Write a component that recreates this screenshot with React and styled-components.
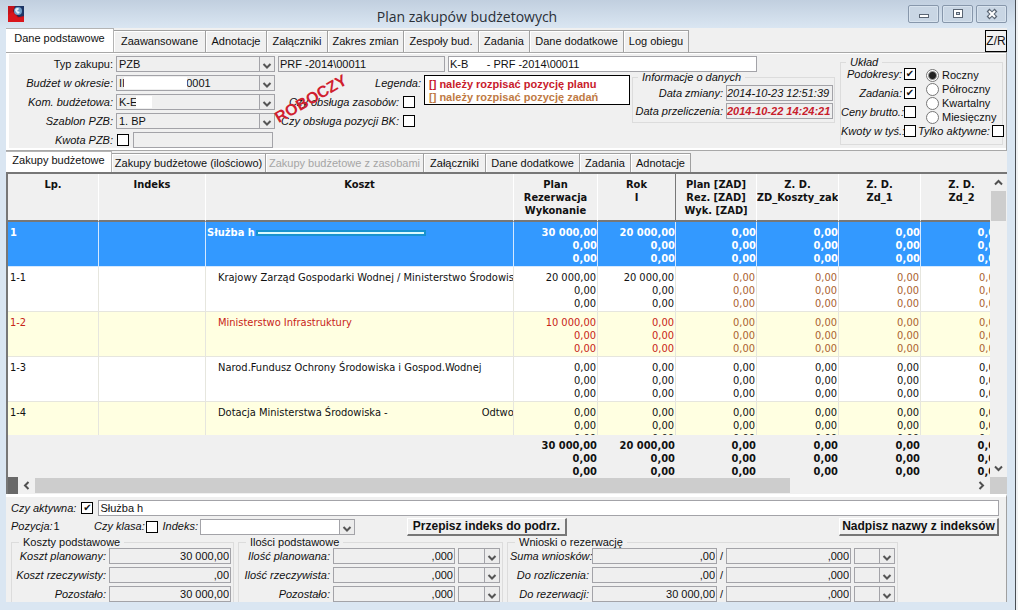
import React from 'react';
import styled, { createGlobalStyle, css } from 'styled-components';

const GlobalStyle = createGlobalStyle`
  * {
    box-sizing: border-box;
  }
  body {
    margin: 0;
    background: #f0f2f4;
    font-family: "Liberation Sans", Arial, sans-serif;
    font-size: 11px;
    line-height: 13px;
    color: #111;
  }
  input, select, button {
    font: inherit;
    color: inherit;
    margin: 0;
    border-radius: 0;
  }
`;

const Window = styled.div`
  display: flex;
  flex-direction: column;
  height: 100vh;
  margin-right: 2px;
  padding: 0 7px 8px 6px;
  border-right: 1px solid #4a4f55;
  background: linear-gradient(#c1cfdf, #dae6f2 28px);
`;

const TitleBar = styled.header`
  display: flex;
  align-items: center;
  height: 28px;
  flex: none;
  padding-left: 2px;

  & h1 {
    flex: 1;
    margin: 0;
    padding: 4px 0 0 2px;
    font: 14px "Open Sans", "Noto Sans", sans-serif;
    text-align: center;
    color: #2b3038;
  }
`;

const WindowButtons = styled.div`
  display: flex;
  gap: 3px;
  padding-right: 1px;
`;

const WindowButton = styled.button`
  display: flex;
  align-items: center;
  justify-content: center;
  width: 31px;
  height: 18px;
  padding: 0;
  border: 1px solid #8797ab;
  border-radius: 2px;
  background: #c9d6e4;
  box-shadow: inset 0 0 0 1px #d8e3ee;
`;

const Client = styled.main`
  display: flex;
  flex-direction: column;
  flex: 1;
  min-height: 0;
  margin-right: 1px;
  overflow: hidden;
  background: #f0f0f0;
`;

const Tabs = styled.nav`
  display: flex;
  align-items: flex-end;
  flex: none;
  height: ${p => (p.$small ? 21 : 24)}px;
`;

const Tab = styled.button`
  height: ${p => (p.$small ? 19 : 22)}px;
  min-width: ${p => p.$width}px;
  padding: 0;
  border: 1px solid #a0a0a0;
  border-left: 0;
  border-bottom: 0;
  background: #f0f0f0;
  box-shadow: inset 1px 1px 0 #fff;
  white-space: nowrap;

  &:disabled {
    color: #a5a5a5;
  }
  ${p => p.$active && css`
    height: 100%;
    padding-bottom: 4px;
    border-color: #b4b4b4;
    background: #fff;
  `}
`;

const CornerButton = styled.button`
  width: 22px;
  height: 22px;
  margin-left: auto;
  padding: 0;
  border: 1px solid #000;
  background: #f0f0f0;
  font-size: 12px;
`;

const TopPanel = styled.section`
  display: flex;
  justify-content: space-between;
  flex: none;
  height: 99px;
  padding: 3px 3px 0 0;
  border: 1px solid #a8a8a8;
  border-width: 1px 1px 1px 0;
  box-shadow: inset 3px 1px 0 #fff, inset 0 -2px 0 #fff;
`;

const Stack = styled.div`
  display: flex;
  flex-direction: column;
  gap: ${p => p.$gap || 0}px;
`;

const Line = styled.div`
  display: flex;
  align-items: center;
  height: ${p => p.$height || 16}px;
  gap: ${p => p.$gap || 0}px;
`;

const Columned = styled.div`
  display: flex;
  align-items: flex-start;
  gap: ${p => p.$gap || 0}px;
`;

const Label = styled.label`
  width: ${p => (p.$width ? `${p.$width}px` : 'auto')};
  flex: none;
  text-align: right;
  font-style: ${p => (p.$plain ? 'normal' : 'italic')};
  white-space: nowrap;
`;

const Field = styled.input`
  width: ${p => (p.$width ? `${p.$width}px` : 'auto')};
  flex: ${p => (p.$width ? 'none' : 1)};
  min-width: 0;
  height: 16px;
  padding: 0 1px;
  border: 1px solid #a3a3a8;
  background: ${p => (p.$white ? '#fff' : '#efefef')};
  text-align: ${p => (p.$number ? 'right' : 'left')};
  outline: 0;
  ${p => p.$date && css`
    padding: 0;
    font-style: italic;
  `}
  ${p => p.$alert && css`
    font-weight: bold;
    color: #c8202c;
  `}
`;

const Check = styled.input.attrs({ type: 'checkbox' })`
  appearance: none;
  position: relative;
  flex: none;
  width: 12px;
  height: 12px;
  border: 1px solid #000;
  background: #fff;

  &:checked::after {
    content: "✔";
    position: absolute;
    inset: 0;
    font: 10px/10px "DejaVu Sans", sans-serif;
    text-align: center;
  }
`;

const Radio = styled.input.attrs({ type: 'radio' })`
  appearance: none;
  flex: none;
  width: 13px;
  height: 13px;
  border: 1px solid #777;
  border-radius: 50%;
  background: #fff;

  &:checked {
    background: radial-gradient(circle, #222 0 3px, #fff 5px);
  }
`;

const ComboBox = styled.div`
  position: relative;
  flex: none;
  width: ${p => p.$width}px;
  height: 16px;

  & select {
    appearance: none;
    width: 100%;
    height: 16px;
    padding: 0 2px;
    border: 1px solid #a3a3a8;
    background: ${p => (p.$white ? '#fff' : '#efefef')};
    outline: 0;
  }
  & svg {
    position: absolute;
    top: 0;
    right: 0;
    pointer-events: none;
  }
`;

const Blank = styled.span`
  position: absolute;
  left: ${p => p.$left}px;
  top: 2px;
  width: ${p => p.$width}px;
  height: 12px;
  background: #fff;
`;

const Middle = styled.div`
  position: relative;
  display: flex;
  width: 357px;
`;

const Checks = styled.div`
  display: flex;
  flex-direction: column;
  gap: 3px;
  width: 149px;
`;

const Stamp = styled.strong`
  position: absolute;
  left: -4px;
  top: 16px;
  font-size: 16px;
  line-height: 16px;
  color: #d0202e;
  transform: rotate(-30deg);
  pointer-events: none;
`;

const Legend = styled.div`
  width: 206px;
  height: 30px;
  padding: 2px 4px;
  border: 1px solid #000;
  background: #fff;
  font-weight: bold;
`;

const LegendLine = styled.div`
  color: ${p => p.$color};
`;

const Group = styled.fieldset`
  min-width: 0;
  margin: 0;
  padding: ${p => p.$padding || '0 2px'};
  border: 1px solid #dcdcdc;

  & legend {
    margin-left: 5px;
    padding: 0 4px;
    height: 12px;
    line-height: 12px;
    font-style: ${p => (p.$italic ? 'italic' : 'normal')};
  }
`;

const InfoGroup = styled(Group)`
  margin-top: -4px;
`;

const LayoutGroup = styled(Group)`
  align-self: flex-start;
  width: 163px;
`;

const GridFrame = styled.section`
  display: flex;
  flex-direction: column;
  flex: 1;
  min-height: 0;
  border-top: 2px solid #777;
  border-left: 2px solid #777;
  font-family: "DejaVu Sans Condensed", "DejaVu Sans", sans-serif;
`;

const GridArea = styled.div`
  display: flex;
  flex: 1;
  min-height: 0;
`;

const GridColumn = styled.div`
  display: flex;
  flex-direction: column;
  flex: 1;
  min-width: 0;
  overflow: hidden;
`;

const GridBody = styled.div`
  flex: 1;
  min-height: 0;
  overflow: hidden;
`;

const GridTotals = styled.div`
  flex: none;
  height: 42px;
  overflow: hidden;
`;

const Table = styled.table`
  width: 995px;
  table-layout: fixed;
  border-collapse: separate;
  border-spacing: 0;
`;

const HeadCell = styled.th`
  height: 48px;
  padding: 4px 0 0;
  border-right: 1px solid ${p => (p.$split ? '#777' : '#fff')};
  border-bottom: 2px solid #777;
  vertical-align: top;
  font-weight: bold;
  white-space: pre;
  overflow: hidden;

  & span {
    display: flex;
    justify-content: center;
  }
`;

const Row = styled.tr`
  background: ${p => p.$background};
  color: ${p => p.$color || '#111'};
  font-weight: ${p => (p.$bold ? 'bold' : 'normal')};
  --line: ${p => (p.$bold ? '#d5e9ff' : '#e6e6de')};
`;

const Cell = styled.td`
  height: 45px;
  padding: 4px ${p => (p.$number && !p.$tight ? 1 : 0)}px 0 ${p => p.$indent || 2}px;
  border-right: 1px solid var(--line);
  border-bottom: 1px solid var(--line);
  vertical-align: top;
  text-align: ${p => (p.$number ? 'right' : 'left')};
  color: ${p => p.$color || 'inherit'};
  white-space: pre;
  overflow: hidden;
`;

const TotalCell = styled.td`
  padding: 4px 1px 0 0;
  text-align: right;
  font-weight: bold;
  white-space: pre;
  overflow: hidden;
`;

const MoreText = styled.span`
  margin-left: 94px;
`;

const Redacted = styled.span`
  display: inline-block;
  width: 170px;
  height: 6px;
  margin-left: 1px;
  border: 2px solid #1793cf;
  background: #d9fbff;
`;

const VerticalBar = styled.div`
  display: flex;
  flex-direction: column;
  flex: none;
  width: 17px;
`;

const VerticalThumb = styled.div`
  height: 30px;
  width: 15px;
  margin: 0 0 auto 1px;
  background: #cdcdcd;
`;

const HorizontalBar = styled.div`
  display: flex;
  align-items: stretch;
  flex: none;
  height: 17px;
`;

const BarEnd = styled.span`
  width: ${p => p.$width}px;
  flex: none;
  background: ${p => p.$color};
`;

const HorizontalThumb = styled.div`
  flex: 0 1 755px;
  margin: 1px auto 1px 0;
  background: #cdcdcd;
`;

const ArrowButton = styled.button`
  display: flex;
  align-items: center;
  justify-content: center;
  flex: none;
  width: 17px;
  height: 17px;
  padding: 0;
  border: 0;
  background: #f0f0f0;
`;

const BottomPanel = styled.section`
  flex: none;
  height: 108px;
  overflow: hidden;
  padding: 2px 7px 0 5px;
  border-top: 3px solid #fff;
  border-right: 1px solid #a0a0a0;
`;

const NameLine = styled(Line)`
  height: 18px;
  gap: 5px;
`;

const BottomLine = styled(Line)`
  height: 19px;
`;

const Position = styled.span`
  width: 81px;

  & i {
    margin-right: 1px;
  }
`;

const PushButton = styled.button`
  height: 18px;
  min-width: 160px;
  margin-left: ${p => (p.$end ? 'auto' : '50px')};
  padding: 0;
  border: solid;
  border-width: 1px 2px 2px 1px;
  border-color: #fff #777 #777 #fff;
  background: #f0f0f0;
  font-size: 12px;
  font-weight: bold;
  white-space: nowrap;
`;

const Groups = styled.div`
  display: flex;
  gap: 4px;
`;

const mainTabs = [
  ['Dane podstawowe', 108], ['Zaawansowane', 92], ['Adnotacje', 61], ['Załączniki', 61],
  ['Zakres zmian', 76], ['Zespoły bud.', 75], ['Zadania', 51], ['Dane dodatkowe', 94], ['Log obiegu', 65]
];

const gridTabs = [
  ['Zakupy budżetowe', 106], ['Zakupy budżetowe (ilościowo)', 154], ['Zakupy budżetowe z zasobami', 158],
  ['Załączniki', 62], ['Dane dodatkowe', 94], ['Zadania', 51], ['Adnotacje', 60]
];

const columns = [
  ['Lp.', 91], ['Indeks', 107], ['Koszt', 308], ['Plan\nRezerwacja\nWykonanie', 84], ['Rok\nI', 78],
  ['Plan [ZAD]\nRez. [ZAD]\nWyk. [ZAD]', 81], ['Z. D.\nZD_Koszty_zak', 82], ['Z. D.\nZd_1', 82], ['Z. D.\nZd_2', 82]
];

const ZERO = '0,00\n0,00\n0,00';

const rows = [
  { lp: '1', name: 'Służba h', plan: '30 000,00', year: '20 000,00', color: '#fff', background: '#3399ff', selected: true },
  { lp: '1-1', name: 'Krajowy Zarząd Gospodarki Wodnej / Ministerstwo Środowiska', plan: '20 000,00', year: '20 000,00', background: '#fff', zad: '#ab6230' },
  { lp: '1-2', name: 'Ministerstwo Infrastruktury', plan: '10 000,00', year: '0,00', color: '#c82418', background: '#ffffe1', zad: '#ab6230' },
  { lp: '1-3', name: 'Narod.Fundusz Ochrony Środowiska i Gospod.Wodnej', plan: '0,00', year: '0,00', background: '#fff' },
  { lp: '1-4', name: 'Dotacja Ministerstwa Środowiska -', more: 'Odtwo', plan: '0,00', year: '0,00', background: '#ffffe1' }
];

const costs = [['Koszt planowany:', '30 000,00'], ['Koszt rzeczywisty:', ',00'], ['Pozostało:', '30 000,00']];
const amounts = ['Ilość planowana:', 'Ilość rzeczywista:', 'Pozostało:'];
const requests = [['Suma wniosków:', ',00'], ['Do rozliczenia:', ',00'], ['Do rezerwacji:', '30 000,00']];

function Combo({ id, width, value = '', white, children }) {
  return (
    <ComboBox $width={width} $white={white}>
      <select id={id} aria-label={id ? undefined : 'Jednostka'} defaultValue={value}>
        <option value={value}>{value}</option>
      </select>
      {children}
      <svg width="16" height="16" viewBox="0 0 16 16">
        <rect x="0.5" y="0.5" width="15" height="15" fill="#ececec" stroke="#a3a3a8" />
        <path d="M4.5 8 8 11.5 11.5 8" fill="none" stroke="#555" strokeWidth="2" />
      </svg>
    </ComboBox>
  );
}

function Arrow({ d, label }) {
  return (
    <ArrowButton aria-label={label}>
      <svg width="9" height="9" viewBox="0 0 9 9">
        <path d={d} fill="none" stroke="#505050" strokeWidth="2" />
      </svg>
    </ArrowButton>
  );
}

function AppIcon() {
  return (
    <svg width="16" height="16" viewBox="0 0 16 16">
      <rect width="16" height="16" fill="#c4121a" />
      <path d="M0 0h7L5 5l5 6 6-2V0z" fill="#5a1524" />
      <path d="M7 0h9v10l-5 1-5-5z" fill="#1d3565" />
      <circle cx="10" cy="5" r="4" fill="#6f9fc9" />
      <path d="M7 4c1-3 4-2 4-1L9 5l3 1-2 2-2-2z" fill="#e3eef5" />
      <path d="M0 16V9l4-3 6 6 6-1v5z" fill="#d9151b" />
    </svg>
  );
}

function Columns() {
  return (
    <colgroup>
      {columns.map(([title, width]) => <col key={title} style={{ width }} />)}
    </colgroup>
  );
}

function TabBar({ items, small, children }) {
  return (
    <Tabs $small={small}>
      {items.map(([title, width], i) => (
        <Tab key={title} $width={width} $small={small} $active={i === 0} disabled={small && i === 2}>{title}</Tab>
      ))}
      {children}
    </Tabs>
  );
}

function MiddleSection() {
  return (
    <Middle>
      <Checks>
        <Line><Label as="span" $width={146}>Legenda:</Label></Line>
        <Line $gap={4}><Label htmlFor="resources" $width={124}>Czy obsługa zasobów:</Label><Check id="resources" /></Line>
        <Line $gap={4}><Label htmlFor="positions" $width={124}>Czy obsługa pozycji BK:</Label><Check id="positions" /></Line>
      </Checks>
      <Legend>
        <LegendLine $color="#c8202c">[] należy rozpisać pozycję planu</LegendLine>
        <LegendLine $color="#c07a44">[] należy rozpisać pozycję zadań</LegendLine>
      </Legend>
      <Stamp>ROBOCZY</Stamp>
    </Middle>
  );
}

function DataInfo() {
  return (
    <InfoGroup $italic $padding="2px 1px 3px 0">
      <legend>Informacje o danych</legend>
      <Stack $gap={2}>
        <Line $gap={3}>
          <Label htmlFor="changed" $width={90}>Data zmiany:</Label>
          <Field id="changed" $width={107} $date defaultValue="2014-10-23 12:51:39" />
        </Line>
        <Line $gap={3}>
          <Label htmlFor="counted" $width={90}>Data przeliczenia:</Label>
          <Field id="counted" $width={107} $date $alert defaultValue="2014-10-22 14:24:21" />
        </Line>
      </Stack>
    </InfoGroup>
  );
}

function LayoutOptions() {
  return (
    <LayoutGroup $italic $padding="0 0 6px">
      <legend>Układ</legend>
      <Columned $gap={10}>
        <Stack $gap={7}>
          <Line $height={12} $gap={2}><Label htmlFor="sub" $width={61}>Podokresy:</Label><Check id="sub" defaultChecked /></Line>
          <Line $height={12} $gap={2}><Label htmlFor="tasks" $width={61}>Zadania:</Label><Check id="tasks" defaultChecked /></Line>
          <Line $height={12} $gap={2}><Label htmlFor="gross" $width={61}>Ceny brutto.:</Label><Check id="gross" /></Line>
        </Stack>
        <Stack>
          {['Roczny', 'Półroczny', 'Kwartalny', 'Miesięczny'].map((name, i) => (
            <Line key={name} $height={14} $gap={3}>
              <Radio id={name} name="period-type" defaultChecked={i === 0} />
              <Label htmlFor={name} $plain>{name}</Label>
            </Line>
          ))}
        </Stack>
      </Columned>
      <Line $height={14} $gap={2}>
        <Label htmlFor="thousands" $width={61}>Kwoty w tyś.:</Label>
        <Check id="thousands" />
        <Label htmlFor="active-only">Tylko aktywne:</Label>
        <Check id="active-only" />
      </Line>
    </LayoutGroup>
  );
}

function Basics() {
  return (
    <TopPanel>
      <Stack $gap={3}>
        <Line $gap={3}>
          <Label htmlFor="type" $width={107} $plain>Typ zakupu:</Label>
          <Combo id="type" width={159} value="PZB" />
          <Field $width={167} aria-label="Numer" defaultValue="PRF -2014\00011" />
          <Field $width={309} $white aria-label="Nazwa" defaultValue={'K-B\u00a0\u00a0\u00a0\u00a0\u00a0 - PRF -2014\\00011'} />
        </Line>
        <Columned>
          <Stack $gap={3}>
            <Line $gap={3}>
              <Label htmlFor="period" $width={107}>Budżet w okresie:</Label>
              <Combo id="period" width={159} value={`II${'\u00a0'.repeat(20)}0001`}><Blank $left={8} $width={63} /></Combo>
            </Line>
            <Line $gap={3}>
              <Label htmlFor="unit" $width={107}>Kom. budżetowa:</Label>
              <Combo id="unit" width={159} value="K-E"><Blank $left={20} $width={16} /></Combo>
            </Line>
            <Line $gap={3}>
              <Label htmlFor="template" $width={107}>Szablon PZB:</Label>
              <Combo id="template" width={159} value="1. BP" />
            </Line>
            <Line $gap={4}>
              <Label htmlFor="amount" $width={107}>Kwota PZB:</Label>
              <Check id="amount" />
              <Field $width={140} aria-label="Kwota" />
            </Line>
          </Stack>
          <MiddleSection />
          <DataInfo />
        </Columned>
      </Stack>
      <LayoutOptions />
    </TopPanel>
  );
}

function CostGrid() {
  return (
    <GridFrame>
      <GridArea>
        <GridColumn>
          <GridBody>
            <Table>
              <Columns />
              <thead>
                <tr>
                  {columns.map(([title], i) => (
                    <HeadCell key={title} $split={i === 4}>
                      {title.split('\n').map(line => <span key={line}>{line}</span>)}
                    </HeadCell>
                  ))}
                </tr>
              </thead>
              <tbody>
                {rows.map(row => (
                  <Row key={row.lp} $background={row.background} $color={row.color} $bold={row.selected}>
                    <Cell>{row.lp}</Cell>
                    <Cell />
                    <Cell $indent={row.selected ? 1 : 12}>
                      {row.name}
                      {row.selected && <Redacted />}
                      {row.more && <MoreText>{row.more}</MoreText>}
                    </Cell>
                    <Cell $number $tight={row.selected}>{`${row.plan}\n0,00\n0,00`}</Cell>
                    <Cell $number $tight={row.selected}>{`${row.year}\n0,00\n0,00`}</Cell>
                    {columns.slice(5).map(([title]) => (
                      <Cell key={title} $number $tight={row.selected} $color={row.zad}>{ZERO}</Cell>
                    ))}
                  </Row>
                ))}
              </tbody>
            </Table>
          </GridBody>
          <GridTotals>
            <Table>
              <Columns />
              <tbody>
                <tr>
                  <TotalCell />
                  <TotalCell />
                  <TotalCell />
                  <TotalCell>{'30 000,00\n0,00\n0,00'}</TotalCell>
                  <TotalCell>{'20 000,00\n0,00\n0,00'}</TotalCell>
                  {columns.slice(5).map(([title]) => <TotalCell key={title}>{ZERO}</TotalCell>)}
                </tr>
              </tbody>
            </Table>
          </GridTotals>
        </GridColumn>
        <VerticalBar>
          <Arrow label="W górę" d="M1 6.5 4.5 3 8 6.5" />
          <VerticalThumb />
          <Arrow label="W dół" d="M1 2.5 4.5 6 8 2.5" />
        </VerticalBar>
      </GridArea>
      <HorizontalBar>
        <BarEnd $width={10} $color="#696969" />
        <Arrow label="W lewo" d="M6.5 1 3 4.5 6.5 8" />
        <HorizontalThumb />
        <Arrow label="W prawo" d="M2.5 1 6 4.5 2.5 8" />
        <BarEnd $width={17} $color="#cdcdcd" />
      </HorizontalBar>
    </GridFrame>
  );
}

function Details() {
  return (
    <BottomPanel>
      <NameLine>
        <Label htmlFor="is-active">Czy aktywna:</Label>
        <Check id="is-active" defaultChecked />
        <Field $white aria-label="Nazwa pozycji" defaultValue="Służba h" />
      </NameLine>
      <BottomLine $gap={2}>
        <Position><i>Pozycja:</i>1</Position>
        <Label htmlFor="is-class" $width={50}>Czy klasa:</Label>
        <Check id="is-class" />
        <Label htmlFor="index" $width={38}>Indeks:</Label>
        <Combo id="index" width={155} white />
        <PushButton>Przepisz indeks do podrz.</PushButton>
        <PushButton $end>Nadpisz nazwy z indeksów</PushButton>
      </BottomLine>
      <Groups>
        <Group>
          <legend>Koszty podstawowe</legend>
          <Stack $gap={3}>
            {costs.map(([title, value], i) => (
              <Line key={title} $gap={3}>
                <Label htmlFor={`cost${i}`} $width={92}>{title}</Label>
                <Field id={`cost${i}`} $width={122} $number defaultValue={value} />
              </Line>
            ))}
          </Stack>
        </Group>
        <Group>
          <legend>Ilości podstawowe</legend>
          <Stack $gap={3}>
            {amounts.map((title, i) => (
              <Line key={title} $gap={3}>
                <Label htmlFor={`amount${i}`} $width={89}>{title}</Label>
                <Field id={`amount${i}`} $width={122} $number defaultValue=",000" />
                <Combo width={42} />
              </Line>
            ))}
          </Stack>
        </Group>
        <Group>
          <legend>Wnioski o rezerwację</legend>
          <Stack $gap={3}>
            {requests.map(([title, value], i) => (
              <Line key={title} $gap={3}>
                <Label htmlFor={`request${i}`} $width={79}>{title}</Label>
                <Field id={`request${i}`} $width={125} $number defaultValue={value} />
                /
                <Field aria-label="Ilość" $width={125} $number defaultValue=",000" />
                <Combo width={41} />
              </Line>
            ))}
          </Stack>
        </Group>
      </Groups>
    </BottomPanel>
  );
}

export default function App() {
  return (
    <Window>
      <GlobalStyle />
      <TitleBar>
        <AppIcon />
        <h1>Plan zakupów budżetowych</h1>
        <WindowButtons>
          <WindowButton aria-label="Minimalizuj">
            <svg width="12" height="12"><rect x="1.5" y="6.5" width="9" height="3" fill="#fff" stroke="#5a6573" /></svg>
          </WindowButton>
          <WindowButton aria-label="Maksymalizuj">
            <svg width="12" height="12">
              <rect x="1.5" y="1.5" width="9" height="8" fill="#fff" stroke="#5a6573" />
              <rect x="4.5" y="4.5" width="3" height="2" fill="#c9d6e4" stroke="#5a6573" />
            </svg>
          </WindowButton>
          <WindowButton aria-label="Zamknij">
            <svg width="12" height="12">
              <path d="M2 2 10 10M10 2 2 10" stroke="#5a6573" strokeWidth="4" />
              <path d="M3 3 9 9M9 3 3 9" stroke="#fff" strokeWidth="2" />
            </svg>
          </WindowButton>
        </WindowButtons>
      </TitleBar>
      <Client>
        <TabBar items={mainTabs}><CornerButton>Z/R</CornerButton></TabBar>
        <Basics />
        <TabBar items={gridTabs} small />
        <CostGrid />
        <Details />
      </Client>
    </Window>
  );
}
